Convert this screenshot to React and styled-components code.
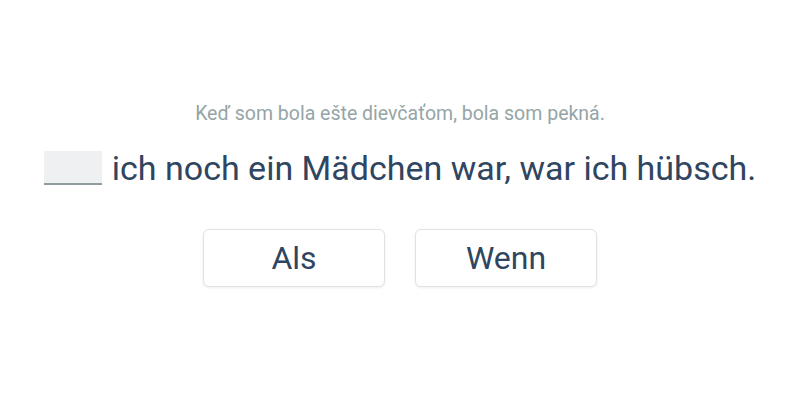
import styled, { createGlobalStyle } from "styled-components";

const Global = createGlobalStyle`
  body {
    margin: 0;
    background: #fff;
    font-family: Roboto, "Noto Sans", sans-serif;
  }
`;

const Page = styled.div`
  width: 800px;
  height: 400px;
  display: flex;
  flex-direction: column;
  align-items: center;
  padding-top: 102px;
  box-sizing: border-box;
`;

const Hint = styled.div`
  font-size: 19.5px;
  line-height: 24px;
  color: #95a5a6;
`;

const Sentence = styled.div`
  margin-top: 22px;
  font-size: 34px;
  line-height: 40px;
  color: #2f4560;
  display: flex;
  align-items: center;
  gap: 10px;
`;

const Blank = styled.span`
  display: inline-block;
  width: 58px;
  height: 32px;
  background: #eef0f2;
  border-bottom: 2px solid #8c9ea0;
`;

const Choices = styled.div`
  margin-top: 41px;
  display: flex;
  gap: 30px;
`;

const Choice = styled.button`
  width: 182px;
  height: 58px;
  background: #fff;
  border: 1px solid #dfe3e6;
  border-radius: 6px;
  box-shadow: 0 1px 3px rgba(0, 0, 0, 0.08);
  font-family: Roboto, "Noto Sans", sans-serif;
  font-size: 32px;
  color: #2f4560;
  cursor: pointer;
`;

export default function App() {
  return (
    <>
      <Global />
      <Page>
        <Hint>Keď som bola ešte dievčaťom, bola som pekná.</Hint>
        <Sentence>
          <Blank />
          <span>ich noch ein Mädchen war, war ich hübsch.</span>
        </Sentence>
        <Choices>
          <Choice>Als</Choice>
          <Choice>Wenn</Choice>
        </Choices>
      </Page>
    </>
  );
}
